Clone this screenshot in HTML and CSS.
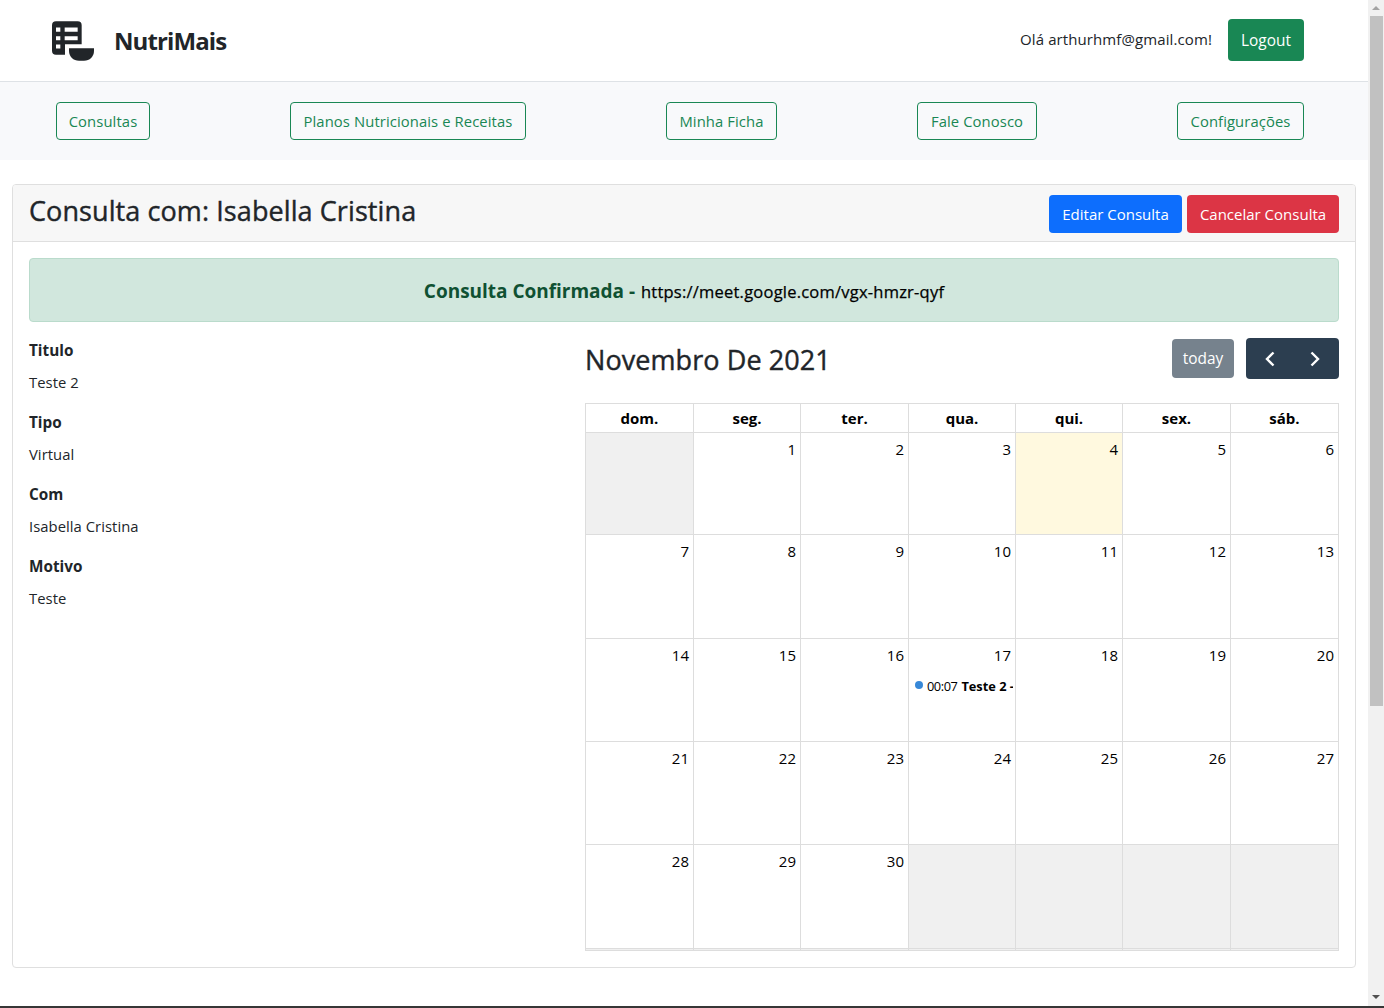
FILE: index.html
```html
<!DOCTYPE html>
<html lang="pt-BR">
<head>
<meta charset="utf-8">
<title>NutriMais</title>
<link rel="stylesheet" href="styles.css">
</head>
<body>
<div class="viewport">
<div class="page">
  <header class="topbar">
    <svg class="logo" viewBox="0 0 126 119" width="42" height="40" fill="#212529">
      <path fill-rule="evenodd" d="M12 0H77Q89 0 89 12V69H39V101H12Q0 101 0 89V12Q0 0 12 0ZM12 19V32H25V19ZM38 19V32H77V19ZM12 45V57H25V45ZM38 45V57H77V45ZM12 70V82H25V70Z"/>
      <path d="M51 81H126V89C126 107 113 119 96 119H81C64 119 51 107 51 89Z"/>
    </svg>
    <span class="brand">NutriMais</span>
    <span class="hello">Olá arthurhmf@gmail.com!</span>
    <a class="btn btn-logout">Logout</a>
  </header>
  <nav class="menu">
    <a class="btn btn-outline w1">Consultas</a>
    <a class="btn btn-outline w2">Planos Nutricionais e Receitas</a>
    <a class="btn btn-outline w3">Minha Ficha</a>
    <a class="btn btn-outline w4">Fale Conosco</a>
    <a class="btn btn-outline w5">Configurações</a>
  </nav>
  <main class="card">
    <div class="card-header">
      <h3 class="title">Consulta com: Isabella Cristina</h3>
      <a class="btn btn-primary">Editar Consulta</a>
      <a class="btn btn-danger">Cancelar Consulta</a>
    </div>
    <div class="card-body">
      <div class="alert"><span class="confirmed">Consulta Confirmada -</span><a class="link">https://meet.google.com/vgx-hmzr-qyf</a></div>
      <div class="columns">
        <dl class="details">
          <dt>Titulo</dt><dd>Teste 2</dd>
          <dt>Tipo</dt><dd>Virtual</dd>
          <dt>Com</dt><dd>Isabella Cristina</dd>
          <dt>Motivo</dt><dd>Teste</dd>
        </dl>
        <section class="calendar">
          <div class="toolbar">
            <h2 class="month">Novembro De 2021</h2>
            <button class="today-btn">today</button>
            <div class="arrows">
              <svg width="10" height="16" viewBox="0 0 10 16"><path d="M8.5 1.5L2 8L8.5 14.5"/></svg>
              <svg width="10" height="16" viewBox="0 0 10 16"><path d="M1.5 1.5L8 8L1.5 14.5"/></svg>
            </div>
          </div>
          <div class="grid">
            <div class="wd">dom.</div><div class="wd">seg.</div><div class="wd">ter.</div><div class="wd">qua.</div><div class="wd">qui.</div><div class="wd">sex.</div><div class="wd">sáb.</div>
            <div class="day off"></div><div class="day">1</div><div class="day">2</div><div class="day">3</div><div class="day current">4</div><div class="day">5</div><div class="day">6</div>
            <div class="day">7</div><div class="day">8</div><div class="day">9</div><div class="day">10</div><div class="day">11</div><div class="day">12</div><div class="day">13</div>
            <div class="day">14</div><div class="day">15</div><div class="day">16</div><div class="day">17<div class="event"><i class="dot"></i><span class="time">00:07</span><b class="name">Teste 2 -</b></div></div><div class="day">18</div><div class="day">19</div><div class="day">20</div>
            <div class="day">21</div><div class="day">22</div><div class="day">23</div><div class="day">24</div><div class="day">25</div><div class="day">26</div><div class="day">27</div>
            <div class="day">28</div><div class="day">29</div><div class="day">30</div><div class="day off"></div><div class="day off"></div><div class="day off"></div><div class="day off"></div>
            <div class="day off"></div><div class="day off"></div><div class="day off"></div><div class="day off"></div><div class="day off"></div><div class="day off"></div><div class="day off"></div>
          </div>
        </section>
      </div>
    </div>
  </main>
</div>
<div class="scrollbar">
  <svg width="8" height="4" viewBox="0 0 8 4" fill="#a3a3a3"><path d="M0 4L4 0L8 4Z"/></svg>
  <div class="thumb"></div>
  <svg class="down" width="8" height="4" viewBox="0 0 8 4" fill="#505050"><path d="M0 0L4 4L8 0Z"/></svg>
</div>
</div>
<div class="edge"></div>
</body>
</html>
```
FILE: styles.css
```css
* { box-sizing: border-box; }
body { margin: 0; height: 1008px; overflow: hidden; background: #fff; color: #212529; font: 400 15px/24px "Open Sans", "Noto Sans", sans-serif; }
.viewport { display: flex; height: 1006px; }
.page { flex: 1; }
.edge { height: 2px; background: #373737; }
.topbar { height: 82px; display: flex; align-items: center; padding: 0 64px 2px 52px; border-bottom: 1px solid #dee2e6; }
.logo { margin-top: 3px; }
.brand { margin: 3px auto 0 20px; font-size: 24px; font-weight: 700; letter-spacing: -.9px; }
.hello { margin: -2px 16px 0 0; letter-spacing: .1px; }
.btn { display: flex; align-items: center; justify-content: center; height: 38px; border-radius: 4px; border: 1px solid transparent; white-space: nowrap; color: #fff; }
.btn-logout { width: 76px; height: 42px; padding-top: 2px; background: #198754; font-size: 15.4px; }
.menu { height: 78px; display: flex; align-items: center; justify-content: space-between; padding: 0 64px 0 56px; background: #f8f9fb; }
.btn-outline { color: #198754; border-color: #198754; font-size: 14.8px; letter-spacing: .1px; }
.w1 { width: 94px; }
.w2 { width: 236px; }
.w3 { width: 111px; }
.w4 { width: 120px; }
.w5 { width: 127px; }
.card { margin: 24px 12px 0; height: 784px; border: 1px solid #dfdfdf; border-radius: 4px; overflow: hidden; }
.card-header { height: 57px; display: flex; align-items: center; padding: 2px 16px 0; background: #f7f7f7; border-bottom: 1px solid #dfdfdf; }
.title, .month { font-size: 27px; font-weight: 400; -webkit-text-stroke: .4px currentColor; }
.title { margin: 0 auto 6px 0; line-height: 34px; letter-spacing: .09px; }
.btn-primary { width: 133px; margin-right: 5px; background: #0d6efd; }
.btn-danger { width: 152px; background: #dc3545; }
.card-body { padding: 16px; }
.alert { height: 64px; display: flex; align-items: center; justify-content: center; gap: 6px; padding-top: 2px; background: #d1e7dd; border: 1px solid #badbcc; border-radius: 4px; }
.confirmed { font-size: 19px; font-weight: 700; color: #0f5132; letter-spacing: -.02px; }
.link { color: #000; font-size: 16.5px; letter-spacing: .22px; -webkit-text-stroke: .25px currentColor; padding-top: 1px; }
.columns { display: flex; justify-content: space-between; margin-top: 16px; }
.details { margin: 0; }
.details dt { font-weight: 700; font-size: 15.3px; margin-bottom: 8px; }
.details dd { margin: 0 0 16px; font-size: 14.8px; letter-spacing: .05px; }
.calendar { width: 754px; }
.toolbar { height: 41px; display: flex; align-items: center; margin-bottom: 24px; }
.month { margin: 3px auto 0 0; letter-spacing: .08px; }
.today-btn { width: 62px; height: 39px; padding: 0; margin-right: 12px; border: 0; border-radius: 4px; background: #76828d; color: #fff; font: inherit; font-size: 15.4px; }
.arrows { width: 93px; height: 41px; display: flex; align-items: center; justify-content: space-between; padding: 0 19px; border-radius: 4px; background: #2c3e50; }
.arrows path { fill: none; stroke: #fff; stroke-width: 2.4; }
.grid { display: grid; grid-template-columns: 108px 107px 108px 107px 107px 108px 108px; grid-template-rows: 29px 102px 104px 103px 103px 104px 2px; border: solid #ddd; border-width: 1px 0 0 1px; color: #000; }
.wd, .day { border: solid #ddd; border-width: 0 1px 1px 0; min-width: 0; overflow: hidden; }
.wd { text-align: center; font-weight: 700; line-height: 29px; }
.day { padding: 4px 4px 0 0; text-align: right; font-size: 15px; }
.off { padding: 0; background: #f0f0f0; }
.current { background: #fff9df; }
.event { display: flex; align-items: center; margin: 9px -2px 0 6px; font-size: 12.8px; line-height: 20px; white-space: nowrap; overflow: hidden; }
.dot { width: 8px; height: 8px; border-radius: 50%; background: #3788d8; margin: -2px 4px 0 0; flex: none; }
.time { margin-right: 4px; letter-spacing: -.45px; }
.scrollbar { width: 16px; display: flex; flex-direction: column; align-items: center; background: #f1f1f1; padding-top: 6px; }
.thumb { width: 13px; height: 690px; margin-top: 6px; margin-left: 1px; background: #c1c1c1; }
.down { margin: auto 0 7px; }
```
